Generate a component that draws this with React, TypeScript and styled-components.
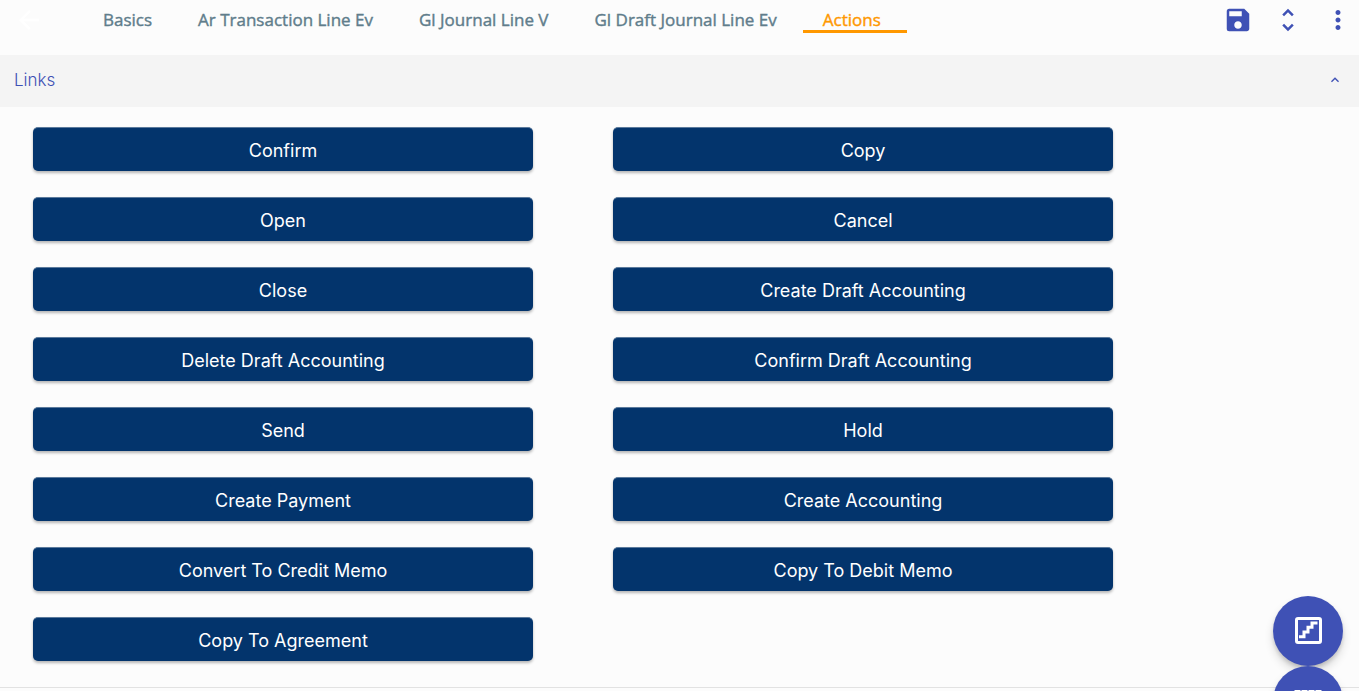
import React from 'react';
import styled, { createGlobalStyle } from 'styled-components';
import { MdArrowBack, MdExpandLess, MdMoreVert, MdSave, MdUnfoldMore } from 'react-icons/md';

const GlobalStyle = createGlobalStyle`
  *, *::before, *::after { box-sizing: border-box; }
  body {
    margin: 0;
    background: #fcfcfc;
    font-family: Inter, "Liberation Sans", sans-serif;
  }
  button { font-family: inherit; cursor: pointer; }
`;

const Toolbar = styled.header`
  display: flex;
  align-items: flex-start;
  height: 55px;
  padding: 0 6px 0 14px;
  background: #fcfcfc;
`;

const IconButton = styled.button<{ $tone?: string }>`
  display: flex;
  align-items: center;
  justify-content: center;
  width: 30px;
  height: 40px;
  padding: 0;
  border: 0;
  background: none;
  color: ${(p) => p.$tone ?? '#3f51b5'};
`;

const Tabs = styled.nav`
  display: flex;
  margin-left: 39px;
`;

const Tab = styled.a<{ $active?: boolean }>`
  height: 33px;
  padding: 8px 26px 0 20px;
  border-bottom: 3px solid ${(p) => (p.$active ? '#ff9800' : 'transparent')};
  color: ${(p) => (p.$active ? '#ff9800' : '#607d8b')};
  font-family: "Open Sans", "Noto Sans", sans-serif;
  font-size: 17px;
  font-weight: 500;
  line-height: 24px;
  -webkit-text-stroke: 0.4px currentColor;
  text-decoration: none;
  white-space: nowrap;
`;

const Tools = styled.div`
  display: flex;
  gap: 20px;
  margin-left: auto;
`;

const SectionHeader = styled.button`
  display: flex;
  align-items: center;
  justify-content: space-between;
  width: 100%;
  height: 52px;
  padding: 0 16px 2px 14px;
  border: 0;
  background: #f4f4f4;
  color: #3f51b5;
  font-size: 17px;
  font-weight: 300;
  line-height: 24px;
`;

const SectionBody = styled.div`
  display: grid;
  grid-template-columns: repeat(2, minmax(0, 500px));
  gap: 26px 80px;
  padding: 20px 33px 26px;
  border-bottom: 1px solid #e2e2e2;
`;

const ActionButton = styled.button`
  height: 44px;
  padding: 2px 16px 0;
  border: 0;
  border-top: 1px solid #5b7a9c;
  border-radius: 5px;
  background: #03346c;
  box-shadow: 0 2px 3px rgba(0, 0, 0, 0.28);
  color: #fff;
  font-size: 18px;
  font-weight: 400;
  line-height: 24px;
`;

const FloatingActions = styled.div`
  position: fixed;
  right: 16px;
  bottom: -45px;
  display: flex;
  flex-direction: column;
`;

const Fab = styled.button`
  display: flex;
  align-items: center;
  justify-content: center;
  width: 70px;
  height: 70px;
  padding: 0;
  border: 0;
  border-radius: 50%;
  background: #3f51b5;
  box-shadow: 0 3px 5px -1px rgba(0, 0, 0, 0.2), 0 6px 10px rgba(0, 0, 0, 0.14);
  color: #fff;
`;

const StairsIcon = () => (
  <svg width="28" height="28" viewBox="0 0 28 28" fill="none" stroke="currentColor" strokeWidth="3" aria-hidden="true">
    <rect x="2.5" y="1.5" width="24" height="24" rx="1.5" />
    <path d="M23.5 6H18V10.3H14V15H10V19.8H5" />
  </svg>
);

const GridIcon = () => (
  <svg width="28" height="22" viewBox="0 0 28 22" fill="currentColor" aria-hidden="true">
    {[0, 8, 16].map((y) =>
      [0, 7, 14, 21].map((x) => <rect key={`${x}-${y}`} x={x + 0.5} y={y} width="6" height="6" />),
    )}
  </svg>
);

const tabs = ['Basics', 'Ar Transaction Line Ev', 'Gl Journal Line V', 'Gl Draft Journal Line Ev', 'Actions'];

const actions = [
  'Confirm', 'Copy',
  'Open', 'Cancel',
  'Close', 'Create Draft Accounting',
  'Delete Draft Accounting', 'Confirm Draft Accounting',
  'Send', 'Hold',
  'Create Payment', 'Create Accounting',
  'Convert To Credit Memo', 'Copy To Debit Memo',
  'Copy To Agreement',
];

export default function App() {
  return (
    <>
      <GlobalStyle />
      <Toolbar>
        <IconButton type="button" aria-label="Back" $tone="#fff"><MdArrowBack size={30} /></IconButton>
        <Tabs>
          {tabs.map((t) => (
            <Tab key={t} href="#" $active={t === 'Actions'}>{t}</Tab>
          ))}
        </Tabs>
        <Tools>
          <IconButton type="button" aria-label="Save"><MdSave size={30} /></IconButton>
          <IconButton type="button" aria-label="Expand"><MdUnfoldMore size={30} /></IconButton>
          <IconButton type="button" aria-label="More"><MdMoreVert size={30} /></IconButton>
        </Tools>
      </Toolbar>
      <main>
        <SectionHeader type="button" aria-expanded="true">
          Links
          <MdExpandLess size={16} />
        </SectionHeader>
        <SectionBody>
          {actions.map((a) => (
            <ActionButton key={a} type="button">{a}</ActionButton>
          ))}
        </SectionBody>
      </main>
      <FloatingActions>
        <Fab type="button" aria-label="Steps"><StairsIcon /></Fab>
        <Fab type="button" aria-label="Grid view"><GridIcon /></Fab>
      </FloatingActions>
    </>
  );
}
